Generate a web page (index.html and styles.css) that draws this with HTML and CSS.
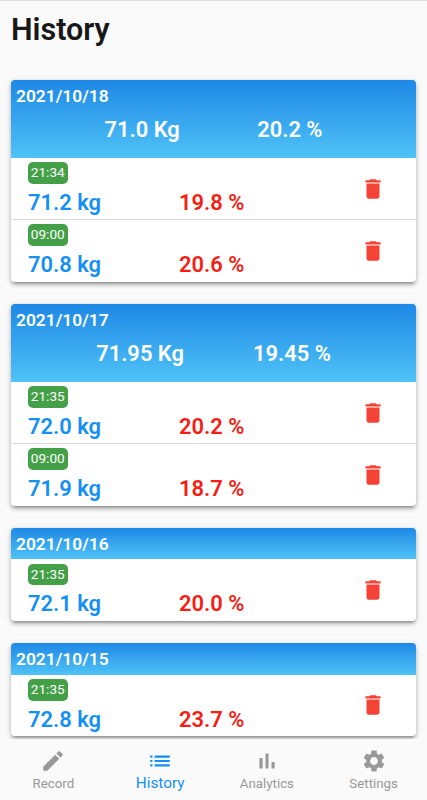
FILE: index.html
```html
<!DOCTYPE html>
<html lang="en">
<head>
    <meta charset="UTF-8">
    <meta name="viewport" content="width=device-width, initial-scale=1.0">
    <title>History</title>
    <link rel="stylesheet" href="styles.css">
</head>
<body>
    <svg class="sprite">
        <symbol id="trash" viewBox="0 0 24 24"><path d="M6 19c0 1.1.9 2 2 2h8c1.1 0 2-.9 2-2V7H6v12zM19 4h-3.500l-1-1h-5l-1 1H5v2h14V4z"/></symbol>
    </svg>

    <main>
        <h1>History</h1>

        <section class="card">
            <header class="day">
                <h2>2021/10/18</h2>
                <div class="average"><span>71.0 Kg</span><span>20.2 %</span></div>
            </header>
            <div class="entry">
                <span class="time">21:34</span>
                <div class="values"><span class="weight">71.2 kg</span><span class="fat">19.8 %</span></div>
                <button class="delete" aria-label="Delete"><svg><use href="#trash"/></svg></button>
            </div>
            <div class="entry">
                <span class="time">09:00</span>
                <div class="values"><span class="weight">70.8 kg</span><span class="fat">20.6 %</span></div>
                <button class="delete" aria-label="Delete"><svg><use href="#trash"/></svg></button>
            </div>
        </section>

        <section class="card">
            <header class="day">
                <h2>2021/10/17</h2>
                <div class="average"><span>71.95 Kg</span><span>19.45 %</span></div>
            </header>
            <div class="entry">
                <span class="time">21:35</span>
                <div class="values"><span class="weight">72.0 kg</span><span class="fat">20.2 %</span></div>
                <button class="delete" aria-label="Delete"><svg><use href="#trash"/></svg></button>
            </div>
            <div class="entry">
                <span class="time">09:00</span>
                <div class="values"><span class="weight">71.9 kg</span><span class="fat">18.7 %</span></div>
                <button class="delete" aria-label="Delete"><svg><use href="#trash"/></svg></button>
            </div>
        </section>

        <section class="card">
            <header class="day">
                <h2>2021/10/16</h2>
            </header>
            <div class="entry">
                <span class="time">21:35</span>
                <div class="values"><span class="weight">72.1 kg</span><span class="fat">20.0 %</span></div>
                <button class="delete" aria-label="Delete"><svg><use href="#trash"/></svg></button>
            </div>
        </section>

        <section class="card">
            <header class="day">
                <h2>2021/10/15</h2>
            </header>
            <div class="entry">
                <span class="time">21:35</span>
                <div class="values"><span class="weight">72.8 kg</span><span class="fat">23.7 %</span></div>
                <button class="delete" aria-label="Delete"><svg><use href="#trash"/></svg></button>
            </div>
        </section>
    </main>

    <nav>
        <a class="tab">
            <svg viewBox="0 0 24 24"><path d="M3 17.250V21h3.750L17.810 9.940l-3.750-3.750L3 17.250zM20.710 7.040c.39-.39.39-1.020 0-1.410l-2.340-2.340c-.39-.39-1.020-.39-1.410 0l-1.830 1.830 3.750 3.750 1.830-1.830z"/></svg>
            <span>Record</span>
        </a>
        <a class="tab active">
            <svg viewBox="0 0 24 24"><path d="M3 13h2v-2H3v2zm0 4h2v-2H3v2zm0-8h2V7H3v2zm4 4h14v-2H7v2zm0 4h14v-2H7v2zM7 7v2h14V7H7z"/></svg>
            <span>History</span>
        </a>
        <a class="tab">
            <svg viewBox="0 0 24 24"><path d="M5 9.200h3V19H5zM10.600 5h2.800v14h-2.800zM16.200 13H19v6h-2.800z"/></svg>
            <span>Analytics</span>
        </a>
        <a class="tab">
            <svg viewBox="0 0 24 24"><path d="M19.140 12.940c.04-.3.060-.61.060-.94 0-.32-.02-.64-.07-.94l2.030-1.580c.18-.14.23-.41.12-.61l-1.920-3.320c-.12-.22-.37-.29-.59-.22l-2.390.96c-.5-.38-1.030-.7-1.620-.94l-.36-2.540c-.04-.24-.24-.41-.48-.41h-3.840c-.24 0-.43.17-.47.41l-.36 2.540c-.59.24-1.130.57-1.620.94l-2.390-.96c-.22-.08-.47 0-.59.22L2.740 8.870c-.12.21-.08.47.12.61l2.030 1.580c-.05.3-.09.63-.09.94s.02.64.07.94l-2.030 1.580c-.18.14-.23.41-.12.61l1.920 3.320c.12.22.37.29.59.22l2.390-.96c.5.38 1.030.7 1.620.94l.36 2.540c.05.24.24.41.48.41h3.840c.24 0 .44-.17.47-.41l.36-2.540c.59-.24 1.130-.56 1.620-.94l2.390.96c.22.08.47 0 .59-.22l1.920-3.320c.12-.22.07-.47-.12-.61l-2.010-1.580zM12 15.600c-1.980 0-3.600-1.620-3.600-3.600s1.620-3.600 3.600-3.600 3.600 1.620 3.600 3.600-1.620 3.600-3.600 3.600z"/></svg>
            <span>Settings</span>
        </a>
    </nav>
</body>
</html>
```

FILE: styles.css
```css
* {
    margin: 0;
    padding: 0;
    box-sizing: border-box;
}

body {
    font-family: Roboto, sans-serif;
    background-color: #fafafa;
    height: 100vh;
    display: flex;
    flex-direction: column;
    overflow: hidden;
}

.sprite {
    display: none;
}

main {
    flex: 1;
    min-height: 0;
    overflow: hidden;
    border-top: 1px solid #e0e0e0;
    padding: 9px 11px 0;
}

h1 {
    font-size: 30.500px;
    font-weight: 600;
    line-height: 40px;
    color: #171717;
    margin-bottom: 30px;
}

.card {
    background-color: white;
    border-radius: 4px;
    margin-bottom: 22.4px;
    box-shadow: 0 3px 3px -2px rgba(0, 0, 0, 0.3), 0 3px 4px rgba(0, 0, 0, 0.2), 0 1px 7px rgba(0, 0, 0, 0.12);
}

.day {
    border-radius: 4px 4px 0 0;
    background: linear-gradient(#1e88e5, #4fc3f7);
    color: white;
    padding: 0 5px;
}

h2 {
    font-size: 17.400px;
    font-weight: 600;
    line-height: 32px;
    height: 31.200px;
}

.average {
    display: flex;
    justify-content: space-evenly;
    padding: 0 11px;
    height: 46.800px;
    font-size: 21.900px;
    font-weight: 600;
    line-height: 38px;
}

.entry {
    display: grid;
    grid-template-columns: 1fr 53px;
    grid-template-rows: 26px 35.600px;
    height: 61.800px;
    padding: 0 17px;
}

.entry:not(:last-child) {
    border-bottom: 1px solid #dcdcdc;
}

.time {
    justify-self: start;
    align-self: end;
    width: 39.500px;
    height: 21.500px;
    border-radius: 5px;
    background-color: #43a047;
    color: white;
    font-size: 13.600px;
    line-height: 21.500px;
    text-align: center;
}

.values {
    grid-row: 2;
    display: flex;
    font-size: 21.900px;
    font-weight: 600;
    line-height: 38px;
}

.weight {
    width: 151px;
    color: #1490f5;
}

.fat {
    color: #f51d14;
}

.delete {
    grid-column: 2;
    grid-row: 1 / 3;
    border: none;
    background: none;
    display: flex;
    align-items: center;
    padding-left: 13.600px;
}

.delete svg {
    width: 26px;
    height: 26px;
    fill: #f44336;
}

nav {
    height: 61px;
    flex-shrink: 0;
    display: flex;
    background-color: #fafafa;
}

.tab {
    flex: 1;
    display: flex;
    flex-direction: column;
    align-items: center;
    padding-top: 9px;
    color: #999;
    font-size: 13.300px;
    line-height: 18px;
}

.tab svg {
    width: 26px;
    height: 26px;
    margin-bottom: 1px;
    fill: currentColor;
}

.tab.active {
    color: #1490f5;
    font-size: 15.300px;
    line-height: 17px;
}
```
